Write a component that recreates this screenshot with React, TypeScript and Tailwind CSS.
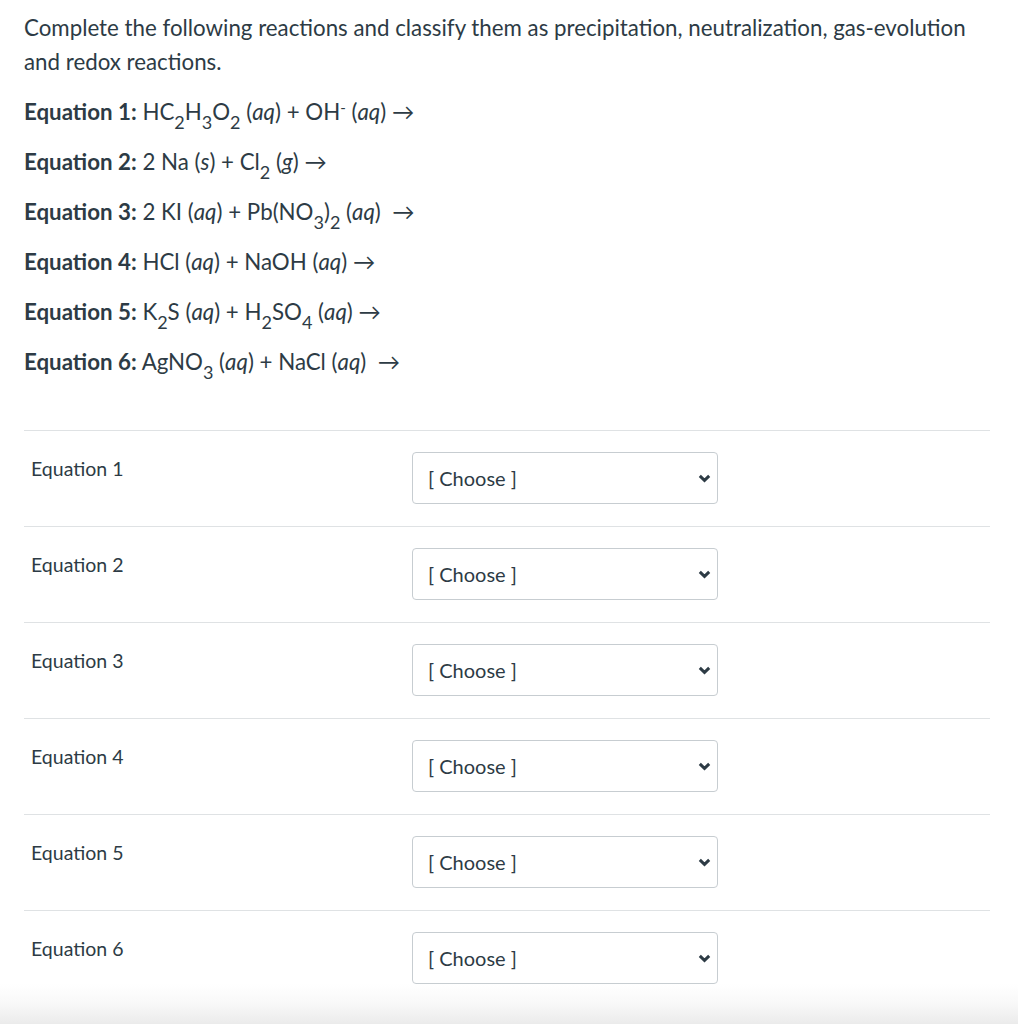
import React from "react";

const font = { fontFamily: "Lato, 'Noto Sans', sans-serif" };

function Aq() {
  return <i>aq</i>;
}

const equations: React.ReactNode[] = [
  <>
    HC<sub>2</sub>H<sub>3</sub>O<sub>2</sub> (<Aq />) + OH<sup>-</sup> (<Aq />) →
  </>,
  <>
    2 Na (<i>s</i>) + Cl<sub>2</sub> (<i>g</i>) →
  </>,
  <>
    2 KI (<Aq />) + Pb(NO<sub>3</sub>)<sub>2</sub> (<Aq />)&nbsp; →
  </>,
  <>
    HCl (<Aq />) + NaOH (<Aq />) →
  </>,
  <>
    K<sub>2</sub>S (<Aq />) + H<sub>2</sub>SO<sub>4</sub> (<Aq />) →
  </>,
  <>
    AgNO<sub>3</sub> (<Aq />) + NaCl (<Aq />)&nbsp; →
  </>,
];

function Chevron() {
  return (
    <svg width="13" height="9" viewBox="0 0 13 9" className="text-[#2d3b45]">
      <path d="M1.8 1.8 L6.5 6.3 L11.2 1.8" fill="none" stroke="currentColor" strokeWidth="3" />
    </svg>
  );
}

export default function App() {
  return (
    <div className="relative min-h-[1024px] bg-white text-[#2d3b45] overflow-hidden" style={font}>
      <div className="pl-6 pr-7 pt-[11px]">
        <p className="text-[22.3px] leading-[34px]">
          Complete the following reactions and classify them as precipitation, neutralization, gas-evolution and redox reactions.
        </p>
        <div className="mt-[17px] flex flex-col gap-[18px]">
          {equations.map((eq, i) => (
            <p key={i} className="text-[22.3px] leading-[32px] [&_sub]:text-[18px] [&_sub]:align-[-4px] [&_sup]:text-[15px]">
              <span className="font-bold">Equation {i + 1}:</span> {eq}
            </p>
          ))}
        </div>

        <div className="mt-[52px] border-t border-[#dfe2e4]">
          {equations.map((_, i) => (
            <div key={i} className="flex h-[96px] border-b border-[#dfe2e4]">
              <div className="w-[388px] pl-[7px] pt-[26px] text-[19.5px] leading-[24px]">Equation {i + 1}</div>
              <div className="pt-[21px]">
                <div className="flex h-[52px] w-[306px] items-center justify-between rounded-[4px] border border-[#c7cdd1] pl-[15px] pr-[6px] text-[20px]">
                  <span>[ Choose ]</span>
                  <Chevron />
                </div>
              </div>
            </div>
          ))}
        </div>
      </div>
      <div className="absolute bottom-0 left-0 right-0 h-[40px] bg-gradient-to-b from-white/0 via-[#f8f8f8] to-[#ebebeb]" />
    </div>
  );
}
